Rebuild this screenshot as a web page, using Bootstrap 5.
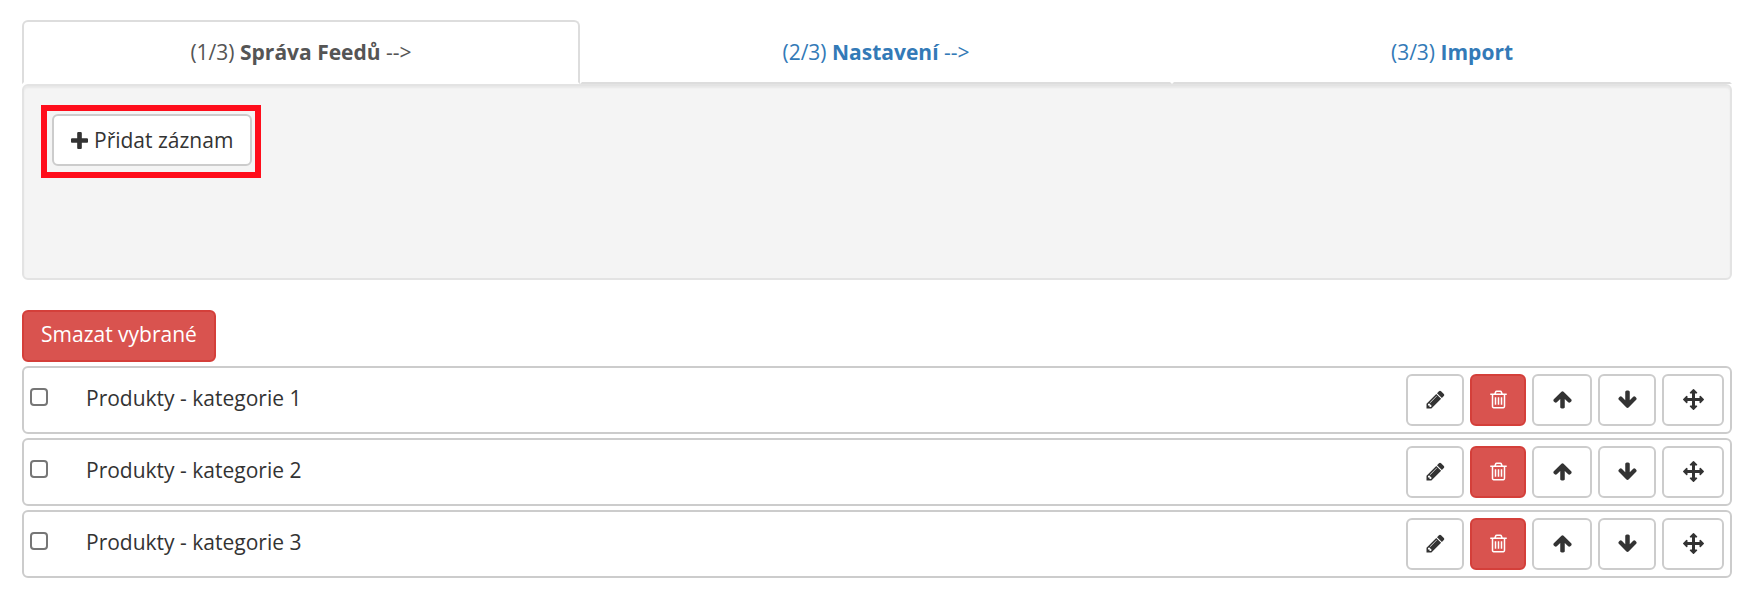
<!DOCTYPE html>
<html lang="cs">
<head>
<meta charset="utf-8">
<meta name="viewport" content="width=device-width, initial-scale=1">
<title>Správa feedů</title>
<link href="https://cdn.jsdelivr.net/npm/bootstrap@5.3.0/dist/css/bootstrap.min.css" rel="stylesheet">
<style>
body { font-family: "Open Sans", sans-serif; font-size: 21px; line-height: 30px; color: #333; background: #fff; }
.page { padding: 20px 22px 28px; }

.step-tabs { display: grid; grid-template-columns: 279fr 296fr 280fr; border: 0; }
.step-tabs .nav-link { height: 64px; margin: 0; padding: 15px 16px; text-align: center; color: #337ab7; border: 2px solid transparent; border-bottom-color: #ddd; border-radius: 6px 6px 0 0; }
.step-tabs .nav-link.active { color: #555; background: #fff; border-color: #ddd; border-bottom-color: #fff; }

.feed-well { min-height: 196px; margin-bottom: 30px; padding: 19px 17px; background: #f4f4f4; border: 2px solid #e3e3e3; border-radius: 6px; box-shadow: inset 0 2px 2px rgba(0,0,0,.05); }
.callout { display: inline-block; padding: 3px 3px 6px 5px; border: 6px solid #ff0d1b; }

.btn { height: 52px; padding: 9px 17px; font-size: 21px; line-height: 30px; border-width: 2px; border-radius: 6px; }
.btn-plain { --bs-btn-color: #333; --bs-btn-bg: #fff; --bs-btn-border-color: #ccc; --bs-btn-hover-color: #333; --bs-btn-hover-bg: #e6e6e6; --bs-btn-hover-border-color: #adadad; }
.btn-remove { --bs-btn-color: #fff; --bs-btn-bg: #d9534f; --bs-btn-border-color: #d43f3a; --bs-btn-hover-color: #fff; --bs-btn-hover-bg: #c9302c; --bs-btn-hover-border-color: #ac2925; }
.btn svg { display: block; fill: currentColor; }
.btn-add { gap: 6px; }
.btn-bulk { padding: 7px 17px 11px; }

.feed-list { display: grid; gap: 4px; margin-top: 4px; }
.feed-row { padding: 6px; border: 2px solid #ccc; border-radius: 6px; }
.feed-row .form-check-input { width: 18px; height: 18px; margin: 14px 38px 0 0; border: 2px solid #767676; border-radius: 4px; }
.feed-row label { padding-top: 9px; }

.row-tools { display: grid; grid-template-columns: 58px 56px 60px 58px 62px; gap: 6px; }
.row-tools .btn { display: flex; align-items: center; justify-content: center; padding: 0 0 2px; }
.row-tools svg { width: 21px; height: 21px; }
</style>
</head>
<body>
<svg class="d-none" aria-hidden="true">
  <symbol id="i-plus" viewBox="0 0 1408 1408"><path d="M1408 608v192q0 40-28 68t-68 28H896v416q0 40-28 68t-68 28H608q-40 0-68-28t-28-68V896H96q-40 0-68-28T0 800V608q0-40 28-68t68-28h416V96q0-40 28-68t68-28h192q40 0 68 28t28 68v416h416q40 0 68 28t28 68z"/></symbol>
  <symbol id="i-pencil" viewBox="0 0 1792 1792"><path d="M491 1536l91-91-235-235-91 91v107h128v128h107zm523-928q0-22-22-22-10 0-17 7l-542 542q-7 7-7 17 0 22 22 22 10 0 17-7l542-542q7-7 7-17zm-54-192l416 416-832 832H128v-416zm683 96q0 53-37 90l-166 166-416-416 166-165q36-38 90-38 53 0 91 38l235 234q37 39 37 91z"/></symbol>
  <symbol id="i-trash" viewBox="0 0 1792 1792"><path d="M704 736v576q0 14-9 23t-23 9h-64q-14 0-23-9t-9-23V736q0-14 9-23t23-9h64q14 0 23 9t9 23zm256 0v576q0 14-9 23t-23 9h-64q-14 0-23-9t-9-23V736q0-14 9-23t23-9h64q14 0 23 9t9 23zm256 0v576q0 14-9 23t-23 9h-64q-14 0-23-9t-9-23V736q0-14 9-23t23-9h64q14 0 23 9t9 23zm128 724V512H448v948q0 22 7 40.500t14.500 27 10.500 8.500h832q3 0 10.500-8.500t14.500-27 7-40.500zM672 384h448l-48-117q-7-9-17-11H738q-10 2-17 11zm928 32v64q0 14-9 23t-23 9h-96v948q0 83-47 143.500t-113 60.500H480q-66 0-113-58.500T320 1464V512h-96q-14 0-23-9t-9-23v-64q0-14 9-23t23-9h309l70-167q15-37 54-63t79-26h320q40 0 79 26t54 63l70 167h309q14 0 23 9t9 23z"/></symbol>
  <symbol id="i-up" viewBox="0 0 1792 1792"><path d="M1675 971q0 51-37 90l-75 75q-38 38-91 38-54 0-90-38L1088 843v704q0 52-37.500 84.500T960 1664H832q-53 0-90.500-32.500T704 1547V843L410 1136q-36 38-90 38t-90-38l-75-75q-38-38-38-90 0-53 38-91l651-651q35-37 90-37 54 0 91 37l651 651q37 39 37 91z"/></symbol>
  <symbol id="i-down" viewBox="0 0 1792 1792"><path d="M1675 832q0 53-37 90l-651 652q-39 37-91 37-53 0-90-37L155 922q-38-36-38-90 0-53 38-91l74-75q39-37 91-37 53 0 90 37l294 294V256q0-52 38-90t90-38h128q52 0 90 38t38 90v704l294-294q37-37 90-37 52 0 91 37l75 75q37 39 37 91z"/></symbol>
  <symbol id="i-move" viewBox="0 0 1792 1792"><path d="M1792 896q0 26-19 45l-256 256q-19 19-45 19t-45-19-19-45v-128h-384v384h128q26 0 45 19t19 45-19 45l-256 256q-19 19-45 19t-45-19l-256-256q-19-19-19-45t19-45 45-19h128v-384H384v128q0 26-19 45t-45 19-45-19L19 941Q0 922 0 896t19-45l256-256q19-19 45-19t45 19 19 45v128h384V384H640q-26 0-45-19t-19-45 19-45L851 19q19-19 45-19t45 19l256 256q19 19 19 45t-19 45-45 19h-128v384h384V640q0-26 19-45t45-19 45 19l256 256q19 19 19 45z"/></symbol>
</svg>

<main class="page">
  <ul class="nav nav-tabs step-tabs">
    <li class="nav-item"><a class="nav-link active" aria-current="page" href="#feedy">(1/3) <b>Správa Feedů</b> --&gt;</a></li>
    <li class="nav-item"><a class="nav-link" href="#nastaveni">(2/3) <b>Nastavení</b> --&gt;</a></li>
    <li class="nav-item"><a class="nav-link" href="#import">(3/3) <b>Import</b></a></li>
  </ul>

  <section class="feed-well" id="feedy">
    <div class="callout">
      <button type="button" class="btn btn-plain btn-add d-flex align-items-center"><svg width="17" height="17"><use href="#i-plus"/></svg>Přidat záznam</button>
    </div>
  </section>

  <button type="button" class="btn btn-remove btn-bulk d-block">Smazat vybrané</button>

  <div class="feed-list">
    <div class="feed-row d-flex align-items-start">
      <input class="form-check-input" type="checkbox" id="feed1">
      <label for="feed1">Produkty - kategorie 1</label>
      <div class="row-tools ms-auto">
        <button type="button" class="btn btn-plain" aria-label="Upravit"><svg><use href="#i-pencil"/></svg></button>
        <button type="button" class="btn btn-remove" aria-label="Smazat"><svg><use href="#i-trash"/></svg></button>
        <button type="button" class="btn btn-plain" aria-label="Nahoru"><svg><use href="#i-up"/></svg></button>
        <button type="button" class="btn btn-plain" aria-label="Dolů"><svg><use href="#i-down"/></svg></button>
        <button type="button" class="btn btn-plain" aria-label="Přesunout"><svg><use href="#i-move"/></svg></button>
      </div>
    </div>
    <div class="feed-row d-flex align-items-start">
      <input class="form-check-input" type="checkbox" id="feed2">
      <label for="feed2">Produkty - kategorie 2</label>
      <div class="row-tools ms-auto">
        <button type="button" class="btn btn-plain" aria-label="Upravit"><svg><use href="#i-pencil"/></svg></button>
        <button type="button" class="btn btn-remove" aria-label="Smazat"><svg><use href="#i-trash"/></svg></button>
        <button type="button" class="btn btn-plain" aria-label="Nahoru"><svg><use href="#i-up"/></svg></button>
        <button type="button" class="btn btn-plain" aria-label="Dolů"><svg><use href="#i-down"/></svg></button>
        <button type="button" class="btn btn-plain" aria-label="Přesunout"><svg><use href="#i-move"/></svg></button>
      </div>
    </div>
    <div class="feed-row d-flex align-items-start">
      <input class="form-check-input" type="checkbox" id="feed3">
      <label for="feed3">Produkty - kategorie 3</label>
      <div class="row-tools ms-auto">
        <button type="button" class="btn btn-plain" aria-label="Upravit"><svg><use href="#i-pencil"/></svg></button>
        <button type="button" class="btn btn-remove" aria-label="Smazat"><svg><use href="#i-trash"/></svg></button>
        <button type="button" class="btn btn-plain" aria-label="Nahoru"><svg><use href="#i-up"/></svg></button>
        <button type="button" class="btn btn-plain" aria-label="Dolů"><svg><use href="#i-down"/></svg></button>
        <button type="button" class="btn btn-plain" aria-label="Přesunout"><svg><use href="#i-move"/></svg></button>
      </div>
    </div>
  </div>
</main>
<script src="https://cdn.jsdelivr.net/npm/bootstrap@5.3.0/dist/js/bootstrap.bundle.min.js"></script>
</body>
</html>
